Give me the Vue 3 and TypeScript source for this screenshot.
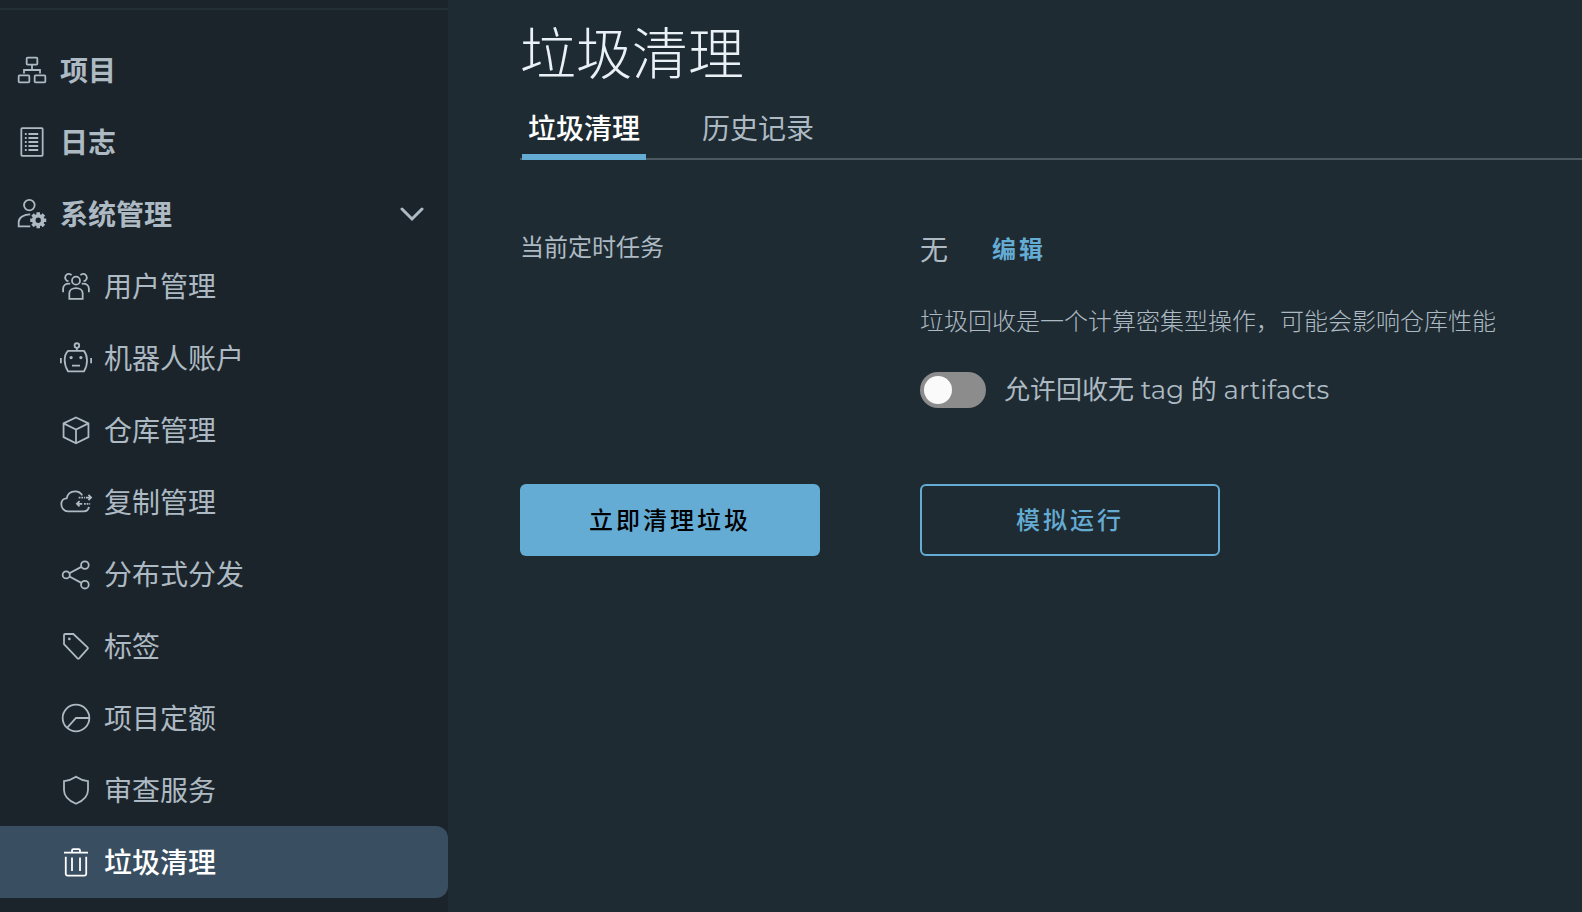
<script setup lang="ts">
import { ref } from 'vue'

type IconName =
  | 'users' | 'robot' | 'box' | 'replicate' | 'share'
  | 'tag' | 'quota' | 'shield' | 'trash'

interface NavItem {
  icon: IconName
  label: string
}

const items: NavItem[] = [
  { icon: 'users', label: '用户管理' },
  { icon: 'robot', label: '机器人账户' },
  { icon: 'box', label: '仓库管理' },
  { icon: 'replicate', label: '复制管理' },
  { icon: 'share', label: '分布式分发' },
  { icon: 'tag', label: '标签' },
  { icon: 'quota', label: '项目定额' },
  { icon: 'shield', label: '审查服务' },
  { icon: 'trash', label: '垃圾清理' },
]

const tabs = ['垃圾清理', '历史记录']

const activeItem = ref<IconName>('trash')
const activeTab = ref(0)
const expanded = ref(true)
const allowUntagged = ref(false)
</script>

<template>
  <div class="layout">
    <nav class="sidebar" aria-label="导航">
      <a class="row top" href="#projects">
        <svg class="icon" viewBox="0 0 36 36" aria-hidden="true">
          <rect x="12" y="4" width="12" height="8" rx="1" />
          <rect x="3" y="24" width="12" height="8" rx="1" />
          <rect x="21" y="24" width="12" height="8" rx="1" />
          <path d="M18 12v6M9 22v-4h18v4" />
        </svg>
        <span>项目</span>
      </a>
      <a class="row top" href="#logs">
        <svg class="icon" viewBox="0 0 36 36" aria-hidden="true">
          <rect x="6" y="2.500" width="24" height="31" rx="1" />
          <path d="M10 9h2M10 13.500h2M10 18h2M10 22.500h2M10 27h2M14 9h11M14 13.500h11M14 18h11M14 22.500h11M14 27h11" />
        </svg>
        <span>日志</span>
      </a>
      <button class="row top" type="button" :aria-expanded="expanded" @click="expanded = !expanded">
        <svg class="icon" viewBox="0 0 36 36" aria-hidden="true">
          <circle cx="15" cy="8" r="6" />
          <path d="M16 18.500c-7 0-13 3.500-13 8.500v5h13" />
          <circle cx="25" cy="25" r="5" class="gear" />
          <path class="teeth" d="M25 16v4M25 30v4M16 25h4M30 25h4M18.600 18.600l3 3M28.400 28.400l3 3M31.400 18.600l-3 3M21.600 28.400l-3 3" />
        </svg>
        <span>系统管理</span>
        <svg class="chevron" :class="{ closed: !expanded }" viewBox="0 0 24 24" aria-hidden="true">
          <path d="M2 7l10 10L22 7" />
        </svg>
      </button>

      <template v-if="expanded">
        <a
          v-for="item in items"
          :key="item.icon"
          class="row sub"
          :class="{ active: item.icon === activeItem }"
          :href="'#' + item.icon"
          @click="activeItem = item.icon"
        >
          <svg class="icon" viewBox="0 0 36 36" aria-hidden="true">
            <template v-if="item.icon === 'users'">
              <circle cx="18" cy="12" r="4.500" />
              <path d="M10.500 32.500v-6c0-4 3.500-6 7.500-6s7.500 2 7.500 6v6z" />
              <path d="M13 5.800a4.100 4.100 0 1 0-3.500 6.800M23 5.800a4.100 4.100 0 1 1 3.500 6.800" />
              <path d="M11.500 15.500C6 15 3.500 17.500 3.500 21v4M24.500 15.500c5.500-.5 8 2 8 5.500v4" />
            </template>
            <template v-else-if="item.icon === 'robot'">
              <circle cx="19" cy="4" r="2.600" />
              <path d="M19 6.600V10M9 10h18c4 5 5 15 0 23H9C4 25 4 15 9 10zM1 18v6M35 18v6M13.500 26.500h9" />
              <circle cx="12.500" cy="17.500" r="1.800" class="dot" />
              <circle cx="23.500" cy="17.500" r="1.800" class="dot" />
            </template>
            <template v-else-if="item.icon === 'box'">
              <path d="M18 4l14 6.500V26l-14 7L4 26V10.500zM4 10.500l14 7 14-7M18 17.500V33" />
            </template>
            <template v-else-if="item.icon === 'replicate'">
              <path d="M25 10.500C23 7 20 6 17 6c-5 0-8.500 3-9.500 8C3.500 14 1.500 17 1.500 20.500c0 4 3 8 7.500 8h18c3 0 5-2 5.500-5" />
              <path d="M19 20h6M22 17l-3 3 3 3M35 13h-6M32 10l3 3-3 3" />
              <path class="dashes" d="M21 13h7M27 20h7" />
            </template>
            <template v-else-if="item.icon === 'share'">
              <circle cx="7" cy="19" r="4" />
              <circle cx="28" cy="8" r="4.300" />
              <circle cx="28" cy="30" r="4.300" />
              <path d="M10.600 17.200L24 10M10.600 20.800L24 28" />
            </template>
            <template v-else-if="item.icon === 'tag'">
              <path d="M4.500 6c0-1 .5-1.500 1.500-1.500h9l16 15c.6.600.6 1.200 0 1.800L21.500 32c-.6.600-1.200.600-1.800 0L4.500 16z" />
              <circle cx="10.500" cy="10" r="1.500" class="dot" />
            </template>
            <template v-else-if="item.icon === 'quota'">
              <circle cx="18" cy="18" r="15" />
              <path d="M33 18H18L8 29" />
            </template>
            <template v-else-if="item.icon === 'shield'">
              <path d="M18 3c4.500 3 9 4.500 13.500 5v10c0 7-5 12-13.500 15.500C9.500 30 4.500 25 4.500 18V8C9 7.500 13.500 6 18 3z" />
            </template>
            <template v-else>
              <path d="M6.500 12v19.500c0 1 .7 1.800 1.800 1.800h19.400c1.100 0 1.800-.8 1.800-1.800V12M4.500 7.500h27M13.500 7V5c0-1 .5-1.500 1.500-1.500h6c1 0 1.500.5 1.500 1.500v2M13.500 13v15M22.500 13v15" />
            </template>
          </svg>
          <span>{{ item.label }}</span>
        </a>
      </template>
    </nav>

    <main class="content">
      <h1>垃圾清理</h1>
      <div class="tabs" role="tablist">
        <button
          v-for="(tab, i) in tabs"
          :key="tab"
          type="button"
          role="tab"
          :aria-selected="i === activeTab"
          :class="{ active: i === activeTab }"
          @click="activeTab = i"
        >{{ tab }}</button>
      </div>

      <section class="form">
        <span class="field">当前定时任务</span>
        <div class="settings">
          <div class="schedule">
            <span>无</span>
            <button class="edit" type="button">编辑</button>
          </div>
          <p class="hint">垃圾回收是一个计算密集型操作，可能会影响仓库性能</p>
          <div class="toggle">
            <input id="untagged" v-model="allowUntagged" type="checkbox" role="switch" />
            <label for="untagged">允许回收无 tag 的 artifacts</label>
          </div>
        </div>
        <button class="btn primary" type="button">立即清理垃圾</button>
        <button class="btn outline" type="button">模拟运行</button>
      </section>
    </main>
  </div>
</template>

<style>
body {
  margin: 0;
  background: #1f2b32;
}
</style>

<style scoped>
.layout {
  display: flex;
  min-height: 100vh;
  background: #1f2b32;
  color: #adbac3;
  font-family: Montserrat, Metropolis, "Noto Sans CJK SC", sans-serif;
  font-size: 28px;
  line-height: 36px;
}

button {
  border: 0;
  background: none;
  color: inherit;
  font: inherit;
  cursor: pointer;
}

.sidebar {
  box-sizing: border-box;
  flex: 0 0 448px;
  padding-top: 34px;
  background: linear-gradient(#222f36, #222f36) 0 8px / 100% 2px no-repeat #1c242b;
}

.row {
  display: flex;
  align-items: center;
  box-sizing: border-box;
  width: 100%;
  height: 72px;
  padding: 0 24px 0 16px;
  gap: 12px;
  text-align: left;
  text-decoration: none;
  color: inherit;
}

.row span {
  padding-top: 2px;
}

.top {
  font-weight: 700;
}

.sub {
  padding-left: 60px;
}

.sub.active {
  border-radius: 0 12px 12px 0;
  background: #3a4e61;
  color: #fff;
  font-weight: 500;
}

.icon {
  flex: none;
  width: 32px;
  height: 32px;
  overflow: visible;
  fill: none;
  stroke: currentColor;
  stroke-width: 2;
}

.icon .gear {
  stroke-width: 4;
}

.icon .teeth {
  stroke-width: 4;
}

.icon .dot {
  fill: currentColor;
  stroke: none;
}

.icon .dashes {
  stroke-dasharray: 2 1;
}

.chevron {
  width: 24px;
  height: 24px;
  margin-left: auto;
  fill: none;
  stroke: currentColor;
  stroke-width: 3;
  stroke-linecap: round;
}

.chevron.closed {
  transform: rotate(-90deg);
}

.content {
  flex: 1;
  min-width: 0;
  padding: 20px 0 0 72px;
}

h1 {
  margin: 0;
  color: #e9f0f6;
  font-size: 56px;
  font-weight: 200;
  line-height: 68px;
}

.tabs {
  display: flex;
  gap: 50px;
  height: 72px;
  padding-left: 2px;
  box-shadow: inset 0 -2px #4b5960;
}

.tabs button {
  padding: 16px 6px 0;
  border-bottom: 6px solid transparent;
}

.tabs .active {
  border-color: #65acd4;
  color: #fff;
  font-weight: 500;
}

.form {
  display: grid;
  grid-template-columns: 300px minmax(300px, 1fr);
  column-gap: 100px;
  padding-top: 70px;
}

.field {
  font-size: 24px;
}

.settings {
  padding-top: 2px;
}

.schedule {
  display: flex;
  gap: 44px;
}

.edit {
  padding: 0;
  color: #65acd4;
  font-size: 24px;
  font-weight: 700;
  letter-spacing: 3px;
}

.hint {
  margin: 36px 0 32px;
  font-size: 24px;
  font-weight: 200;
}

.toggle {
  display: flex;
  align-items: center;
  gap: 18px;
  font-size: 26px;
}

.toggle input {
  appearance: none;
  flex: none;
  display: flex;
  align-items: center;
  box-sizing: border-box;
  width: 66px;
  height: 36px;
  margin: 0;
  padding: 4px;
  border-radius: 18px;
  background: #8c8c8c;
}

.toggle input::before {
  content: "";
  width: 28px;
  height: 28px;
  border-radius: 50%;
  background: #fafafa;
}

.toggle input:checked {
  justify-content: flex-end;
  background: #65acd4;
}

.btn {
  width: 300px;
  height: 72px;
  margin-top: 76px;
  padding: 2px 0 0;
  border-radius: 6px;
  font-size: 24px;
  font-weight: 500;
  letter-spacing: 3px;
}

.primary {
  background: #65acd4;
  color: #000;
}

.outline {
  border: 2px solid #65acd4;
  color: #65acd4;
}
</style>
